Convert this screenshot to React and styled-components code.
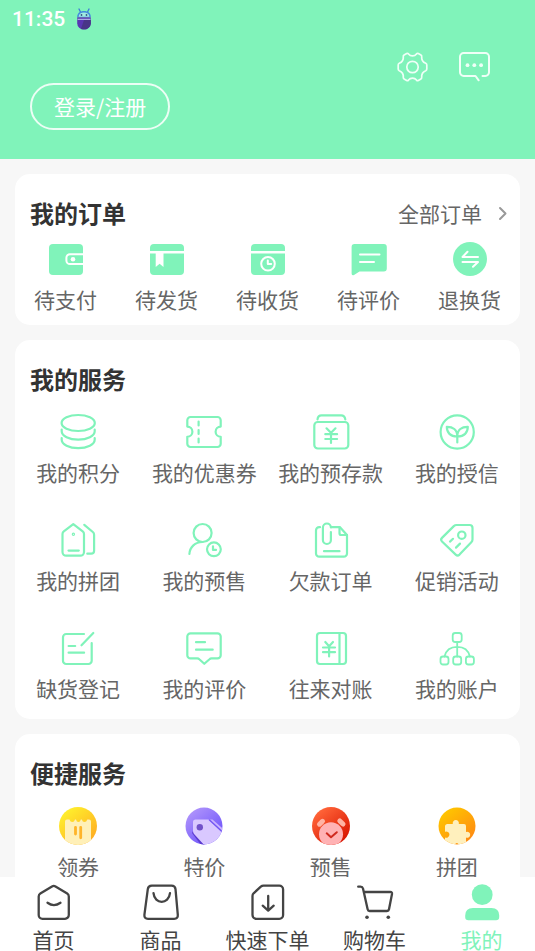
import React from "react";
import styled, { createGlobalStyle } from "styled-components";

const GREEN = "#80f3ba";

const GlobalStyle = createGlobalStyle`
  * { box-sizing: border-box; }
  body {
    margin: 0;
    background: #f7f7f7;
    font-family: "Noto Sans CJK SC", "Noto Sans", sans-serif;
    font-size: 21px;
    color: #666;
  }
  button { font: inherit; color: inherit; background: none; border: 0; padding: 0; cursor: pointer; }
  a { color: inherit; text-decoration: none; }
  h2, ul { margin: 0; padding: 0; list-style: none; }
`;

const Screen = styled.div`
  height: 100vh;
  display: flex;
  flex-direction: column;
`;

const Scroller = styled.main`
  flex: 1;
  min-height: 0;
  overflow-y: auto;
  scrollbar-width: none;
`;

const Header = styled.header`
  background: ${GREEN};
  color: #fff;
  padding-bottom: 29px;
`;

const StatusBar = styled.div`
  display: flex;
  align-items: center;
  gap: 11px;
  height: 38px;
  padding: 0 12px;
  font-family: Roboto, sans-serif;
  font-size: 21px;
  font-weight: 500;
`;

const Tools = styled.div`
  display: flex;
  justify-content: flex-end;
  gap: 31px;
  padding: 14px 45px 0;
`;

const ToolButton = styled.button`
  display: flex;
`;

const LoginButton = styled.button`
  display: block;
  height: 47px;
  margin: 1px 0 0 30px;
  padding: 0 22px 2px;
  border: 2px solid rgba(255, 255, 255, 0.85);
  border-radius: 24px;
  line-height: 28px;
`;

const Cards = styled.div`
  display: flex;
  flex-direction: column;
  gap: 15px;
  padding: 15px;
`;

const Card = styled.section`
  background: #fff;
  border-radius: 15px;
  padding: 24px 0 ${(p) => p.$bottom}px;
`;

const CardHead = styled.div`
  display: flex;
  justify-content: space-between;
  align-items: center;
  height: 30px;
  padding: 0 12px 0 15px;
`;

const Title = styled.h2`
  font-size: 24px;
  line-height: 30px;
  font-weight: 700;
  color: #333;
`;

const MoreLink = styled.a`
  display: flex;
  align-items: center;
  gap: 16px;
  line-height: 28px;
`;

const Grid = styled.ul`
  display: grid;
  grid-template-columns: repeat(${(p) => p.$columns}, 1fr);
  row-gap: 36px;
  padding-top: ${(p) => p.$top}px;
`;

const Tile = styled.a`
  display: flex;
  flex-direction: column;
  align-items: center;
  gap: 8px;
  line-height: 28px;
  white-space: nowrap;
`;

const NavBar = styled.nav`
  display: grid;
  grid-template-columns: repeat(5, 1fr);
  background: #fff;
  padding: 7px 0 2px;
`;

const NavItem = styled.a`
  display: flex;
  flex-direction: column;
  align-items: center;
  gap: 9px;
  line-height: 20px;
  white-space: nowrap;
  color: ${(p) => (p.$active ? GREEN : "#444")};
`;

const Drawing = styled.svg.attrs({ "aria-hidden": true })`
  display: block;
  flex: none;
  overflow: visible;
  fill: none;
  stroke: ${(p) => p.$ink || "none"};
  stroke-width: ${(p) => p.$weight || 2};
  stroke-linecap: round;
  stroke-linejoin: round;
`;

const Line = ({ children }) => (
  <Drawing width="36" height="36" viewBox="0 0 36 36" $ink={GREEN} $weight={2.2}>{children}</Drawing>
);
const Solid = ({ children }) => (
  <Drawing width="36" height="36" viewBox="0 0 36 36" $ink="#fff">{children}</Drawing>
);
const Tab = ({ children }) => (
  <Drawing width="36" height="36" viewBox="0 0 36 36" $ink="#444" $weight={2.3}>{children}</Drawing>
);
const fill = { fill: GREEN, stroke: "none" };

const orders = [
  ["待支付", <Solid>
    <rect x="1" y="3" width="34" height="31" rx="4" {...fill} />
    <path d="M35 13.2H22a3.6 3.6 0 0 0-3.6 3.6v2.6A3.6 3.6 0 0 0 22 23h13" strokeLinecap="butt" />
    <circle cx="25" cy="18.2" r="2.3" fill="#fff" stroke="none" />
  </Solid>],
  ["待发货", <Solid>
    <path d="M1 10V7a4 4 0 0 1 4-4h26a4 4 0 0 1 4 4v3zM1 12.5h34V30a4 4 0 0 1-4 4H5a4 4 0 0 1-4-4z" {...fill} />
    <path d="M6.7 12h7.8v14l-3.9-3.2L6.7 26z" fill="#fff" stroke="none" />
  </Solid>],
  ["待收货", <Solid>
    <path d="M1 10V7a4 4 0 0 1 4-4h26a4 4 0 0 1 4 4v3zM1 12.5h34V30a4 4 0 0 1-4 4H5a4 4 0 0 1-4-4z" {...fill} />
    <circle cx="18" cy="22.8" r="6.8" />
    <path d="M17.8 19.5v3.6h3.4" />
  </Solid>],
  ["待评价", <Solid>
    <path d="M3.5 3h29.3a3 3 0 0 1 3 3v21.5a3 3 0 0 1-3 3H8.5L3 34q-2.4 1-2.4-1.5V6a3 3 0 0 1 2.9-3z" {...fill} />
    <path d="M9 13.5h19.5M9 21h14" />
  </Solid>],
  ["退换货", <Solid>
    <circle cx="18" cy="18" r="17" {...fill} />
    <path d="M26 16H10.5l5-5.2M10.5 21H26l-5 4.7" />
  </Solid>],
];

const services = [
  ["我的积分", <Line>
    <ellipse cx="18.2" cy="9" rx="16.6" ry="8" />
    <path d="M1.7 15.5v1.8c0 4.6 7.4 8.4 16.5 8.4s16.500-3.800 16.500-8.400v-1.800M1.700 24v1.800c0 4.600 7.400 8.400 16.500 8.400s16.500-3.800 16.500-8.400V24" />
  </Line>],
  ["我的优惠券", <Line>
    <path d="M4.5 3h27a3.2 3.2 0 0 1 3.2 3.2v6.4a5 5 0 0 0 0 10.2v7a3.2 3.2 0 0 1-3.2 3.2h-27a3.2 3.2 0 0 1-3.2-3.2v-7a5 5 0 0 0 0-10.2V6.2A3.2 3.2 0 0 1 4.500 3z" />
    <path d="M12.600 7.500v4M12.600 16v4M12.600 24.500v4" />
  </Line>],
  ["我的预存款", <Line>
    <rect x="1.300" y="8" width="34" height="26.500" rx="3.500" />
    <path d="M4.500 5.300C4.800 2.600 6 1.300 8.500 1.300h19.600c2.500 0 3.800 1.300 4.200 4" />
    <path d="M13.500 14.300l4.500 4.500 4.500-4.500M12.300 20.200h11.800M12.300 25h11.800M18 19v10" />
  </Line>],
  ["我的授信", <Line>
    <circle cx="18.200" cy="18" r="16.600" />
    <path d="M18.300 28.500v-6.300M18.300 22.500c0-7-4.500-9.800-10.500-9.700 0 5.800 3.500 9.800 10.500 9.700zM18.300 22.500c0-7 4.500-9.800 10.500-9.700 0 5.800-3.500 9.800-10.500 9.700z" />
  </Line>],
  ["我的拼团", <Line>
    <path d="M13.300 2.200l9.400 7.200q1.300 1 1.300 2.600v18a3.700 3.700 0 0 1-3.700 3.700H6.200A3.700 3.700 0 0 1 2.500 30V12q0-1.600 1.300-2.600z" />
    <path d="M8.500 28.600h10.300M24.300 2.800l8.500 7.200q1.300 1.100 1.300 2.700v16q0 3-3 3h-3.800" />
    <circle cx="13.400" cy="12.300" r=".6" />
  </Line>],
  ["我的预售", <Line>
    <circle cx="16.600" cy="11" r="9" />
    <path d="M3.400 32c.4-7 5.800-12 13-12" />
    <circle cx="27.900" cy="27.300" r="6.900" />
    <path d="M27 24.300v3.600h3" />
  </Line>],
  ["欠款订单", <Line>
    <path d="M7 5.200H6.200a3.200 3.200 0 0 0-3.200 3.200v23a3.200 3.200 0 0 0 3.200 3.200h24.600a3.200 3.200 0 0 0 3.200-3.200V13l-7-7.800H18.500" />
    <path d="M26.500 5.400v5.800q0 1.800 1.800 1.800H34" />
    <path d="M17.900 10v8a4 4 0 0 1-8 0V5.500a4 4 0 0 1 8 0M11 29.200h15.500" />
  </Line>],
  ["促销活动", <Line>
    <path d="M17.600 3H30.600Q33.500 3 33.500 6V17.500q0 1.600-1.200 2.800L20.500 32.600q-1.900 1.800-3.800 0L3 19.500q-1.800-1.800 0-3.600L14.800 4.100Q16 3 17.600 3z" />
    <circle cx="22.800" cy="13.200" r="3.700" />
    <path d="M11 19.600l3-2.800M17 25.600l4-4" />
  </Line>],
  ["缺货登记", <Line>
    <path d="M24 4H6.200a3.200 3.200 0 0 0-3.200 3.200v23.500A3.200 3.200 0 0 0 6.200 34h22.300a3.200 3.200 0 0 0 3.200-3.200V13" />
    <path d="M21.500 15.300L33.300 3M8.600 16h6.600M8.600 22.700h15.500" />
  </Line>],
  ["我的评价", <Line>
    <path d="M4.500 3.300h27a3.200 3.200 0 0 1 3.200 3.200v18.700a3.200 3.200 0 0 1-3.200 3.200h-6q-1.200 0-2 .8l-5.200 4.600-5-4.600q-.8-.8-2-.8H4.500a3.200 3.200 0 0 1-3.200-3.200V6.500a3.200 3.200 0 0 1 3.200-3.200z" />
    <path d="M10 12.200h9M10 19.700h16.700" />
  </Line>],
  ["往来对账", <Line>
    <rect x="4" y="3" width="29" height="31" rx="3" />
    <path d="M26.500 3v31M12.300 12l3.800 4.300L20 12M10 17.500h12M10 22.200h12M16.100 17v9.500" />
  </Line>],
  ["我的账户", <Drawing width="36" height="36" viewBox="0 0 36 36" $ink={GREEN} $weight={1.8}>
    <rect x="13.700" y="3" width="9" height="9" rx="2.500" />
    <rect x="1.500" y="26.500" width="8" height="8" rx="2.500" />
    <rect x="14.200" y="26.500" width="8" height="8" rx="2.500" />
    <rect x="26.900" y="26.500" width="8" height="8" rx="2.500" />
    <path d="M18.200 12v14.500M5.500 26.500C7 20 12 16.800 18.200 16.800S29.400 20 30.900 26.500" />
  </Drawing>],
];

const Badge = ({ id, from, to, radius = 19, children }) => (
  <Drawing width="36" height="36" viewBox="1 1 36 36">
    <defs>
      <linearGradient id={id} x1=".2" y1=".1" x2=".85" y2=".9">
        <stop stopColor={from} />
        <stop offset="1" stopColor={to} />
      </linearGradient>
      <clipPath id={`${id}-clip`}><circle cx="19" cy="19" r={radius} /></clipPath>
    </defs>
    <circle cx="19" cy="19" r={radius} fill={`url(#${id})`} />
    <g clipPath={`url(#${id}-clip)`}>{children}</g>
  </Drawing>
);

const shortcuts = [
  ["领券", <Badge id="coupon" from="#ffee2c" to="#ffac22">
    <path d="M8 12.500h2.500q.8 2.500 2.800 2.500t2.700-2.500h1q.6 2.500 2.400 2.500t2.400-2.500h1q.7 2.500 2.700 2.500t2.800-2.500H30q2 0 2 2V38H6V14.500q0-2 2-2z" fill="#fff0b8" />
    <path d="M16.500 20.300V27M21.700 20.300v10.500" stroke="#ffb429" strokeWidth="2.800" />
  </Badge>],
  ["特价", <Badge id="special" from="#ac91fb" to="#6b50fb" radius={18.5}>
    <path d="M8 24l12 14H16L7 26z" fill="#5b3bd0" />
    <path d="M10.500 12.500H23q2 0 3.500 1.400L39 26 27 40h-6L9.500 27.500Q8 26 8 24v-9q0-2.500 2.500-2.500z" fill="#d9c8ff" />
    <path d="M24 12.500h3.500L39 22.500v3.500z" fill="#c9b2ff" />
    <path d="M24.500 13L38 25.500" stroke="#7357f3" strokeWidth="1.500" />
    <circle cx="14.800" cy="20.200" r="3.200" fill="#7152ca" />
  </Badge>],
  ["预售", <Badge id="presale" from="#ff6438" to="#d81400">
    <path d="M7.500 17.200l3-2.900M27.800 14l3.200 3" stroke="#ffb3a4" strokeWidth="5" />
    <circle cx="19" cy="27.300" r="12" fill="#ffb2b4" />
    <path d="M14.700 26.300l4.300 3.900 5.800-5" stroke="#cf2a1f" strokeWidth="2" />
  </Badge>],
  ["拼团", <Badge id="group" from="#ffc400" to="#ff8a12" radius={18.5}>
    <path d="M9.500 17h5.300a3.100 3.100 0 1 1 6 0h5.200q2 0 2 2v6a3 3 0 1 1 0 5.500V38h-7q-2-4-4.500 0H7v-7.600a3.100 3.100 0 1 0 0-5.600V19.500Q7 17 9.500 17z" fill="#fff0bd" />
  </Badge>],
];

const tabs = [
  ["首页", <Tab>
    <path d="M16 2.400L4.300 9.500Q2.700 10.500 2.700 12.400V31a3.800 3.800 0 0 0 3.800 3.800H29A3.800 3.800 0 0 0 32.800 31V12.400q0-1.900-1.600-2.900L19.500 2.400q-1.750-1-3.500 0z" />
    <path d="M11.500 18.800q6.300 4.600 13 0" />
  </Tab>],
  ["商品", <Tab>
    <path d="M8.800 1.700H28.500q3.600 0 4 3.500l2.300 25.600q.3 4-3.600 4H5q-3.900 0-3.600-4L4.800 5.200q.4-3.500 4-3.500z" />
    <path d="M10.500 9.200c1 11.500 15.300 11.500 16.500 0" />
  </Tab>],
  ["快速下单", <Tab>
    <path d="M13.500 1.600H29.300A3.800 3.800 0 0 1 33.100 5.400V31a3.800 3.800 0 0 1-3.800 3.800H6.300A3.800 3.800 0 0 1 2.500 31V12q0-1.600 1.100-2.700L10.800 2.700Q12 1.600 13.500 1.600z" />
    <path d="M18.200 12v14.500M12.700 21.700l5.500 4.900 5.500-4.900" />
  </Tab>],
  ["购物车", <Tab>
    <path d="M1.200 2.700H3.500Q5.500 2.700 6 4.500L10.700 25.400Q11 27 12.600 27H30q1.700 0 2-1.700L35 10q.3-2-1.700-2H7" />
    <circle cx="10" cy="33.200" r="1.800" fill="#444" stroke="none" />
    <circle cx="31.300" cy="33.200" r="1.800" fill="#444" stroke="none" />
  </Tab>],
  ["我的", <Drawing width="36" height="36" viewBox="0 0 36 36">
    <circle cx="18.200" cy="10.700" r="10.400" fill={GREEN} />
    <path d="M9 24h18.500q7.700 0 7.700 7.500v1.500q0 3.200-3.200 3.200H4.400q-3.200 0-3.200-3.200v-1.500Q1.200 24 9 24z" fill={GREEN} />
  </Drawing>],
];

const TileGrid = ({ items, columns, top }) => (
  <Grid $columns={columns} $top={top}>
    {items.map(([label, icon]) => (
      <li key={label}><Tile href="#">{icon}<span>{label}</span></Tile></li>
    ))}
  </Grid>
);

export default function App() {
  return (
    <Screen>
      <GlobalStyle />
      <Scroller>
        <Header>
          <StatusBar>
            <span>11:35</span>
            <Drawing width="16" height="22" viewBox="0 0 16 22">
              <path d="M3 1l1.500 3M13 1l-1.500 3" stroke="#3d79d8" strokeWidth="1.300" />
              <path d="M1.200 9C1.200 5 4 3 8 3s6.800 2 6.800 6z" fill="#448bdd" />
              <path d="M2.600 8.700Q3.300 4.500 8 4.500t5.400 4.200z" fill="#a1ece1" />
              <circle cx="5.500" cy="7" r=".9" fill="#35528b" />
              <circle cx="10.500" cy="7" r=".9" fill="#35528b" />
              <path d="M1.200 9.200h13.600v6a6.800 6.300 0 0 1-13.600 0z" fill="#5936b3" />
              <path d="M8 12h6.800v3.200A6.800 6.300 0 0 1 5 20.700z" fill="#493487" />
              <path d="M2 11.300h12" stroke="#c9dcf5" strokeWidth=".9" />
            </Drawing>
          </StatusBar>
          <Tools>
            <ToolButton aria-label="设置">
              <Drawing width="31" height="30" viewBox="0 0 31 30" $ink="#effff7" $weight={1.7}>
                <path d="M15.500 3.900Q18 3.900 19.500 1.900Q20.300 1 21.300 1.600L23.900 3.100Q24.900 3.700 24.700 4.800Q24.300 9.500 28.700 11.300Q29.800 11.800 29.800 12.900V17.100Q29.800 18.200 28.700 18.700Q24.300 20.500 24.700 25.200Q24.900 26.300 23.900 26.900L21.300 28.400Q20.300 29 19.500 28.100Q18 26.100 15.500 26.100Q13 26.100 11.500 28.100Q10.700 29 9.700 28.400L7.100 26.900Q6.100 26.300 6.300 25.200Q6.700 20.500 2.300 18.700Q1.200 18.200 1.200 17.100V12.900Q1.200 11.800 2.300 11.300Q6.700 9.500 6.300 4.800Q6.100 3.700 7.100 3.100L9.700 1.600Q10.700 1 11.500 1.900Q13 3.900 15.500 3.900z" />
                <circle cx="15.500" cy="15" r="5.700" />
              </Drawing>
            </ToolButton>
            <ToolButton aria-label="消息">
              <Drawing width="31" height="30" viewBox="0 0 31 30" $ink="#effff7">
                <path d="M19.700 28.300l-3.200-4.300H4.700A3.700 3.700 0 0 1 1 20.300V4.700A3.700 3.700 0 0 1 4.700 1h21.600A3.700 3.700 0 0 1 30 4.700v15.600a3.700 3.700 0 0 1-3.700 3.700H23.500" />
                <g fill="#effff7" stroke="none">
                  <circle cx="8.500" cy="13.200" r="1.900" />
                  <circle cx="15.300" cy="13.200" r="1.900" />
                  <circle cx="22.100" cy="13.200" r="1.900" />
                </g>
              </Drawing>
            </ToolButton>
          </Tools>
          <LoginButton>登录/注册</LoginButton>
        </Header>
        <Cards>
          <Card $bottom={12}>
            <CardHead>
              <Title>我的订单</Title>
              <MoreLink href="#">
                全部订单
                <Drawing width="10" height="14" viewBox="0 0 10 14" $ink="#999"><path d="M2 2l5.500 5.500L2 13" /></Drawing>
              </MoreLink>
            </CardHead>
            <TileGrid items={orders} columns={5} top={13} />
          </Card>
          <Card $bottom={17}>
            <CardHead><Title>我的服务</Title></CardHead>
            <TileGrid items={services} columns={4} top={20} />
          </Card>
          <Card $bottom={17}>
            <CardHead><Title>便捷服务</Title></CardHead>
            <TileGrid items={shortcuts} columns={4} top={20} />
          </Card>
        </Cards>
      </Scroller>
      <NavBar>
        {tabs.map(([label, icon]) => (
          <NavItem key={label} href="#" $active={label === "我的"} aria-current={label === "我的" ? "page" : undefined}>
            {icon}<span>{label}</span>
          </NavItem>
        ))}
      </NavBar>
    </Screen>
  );
}
